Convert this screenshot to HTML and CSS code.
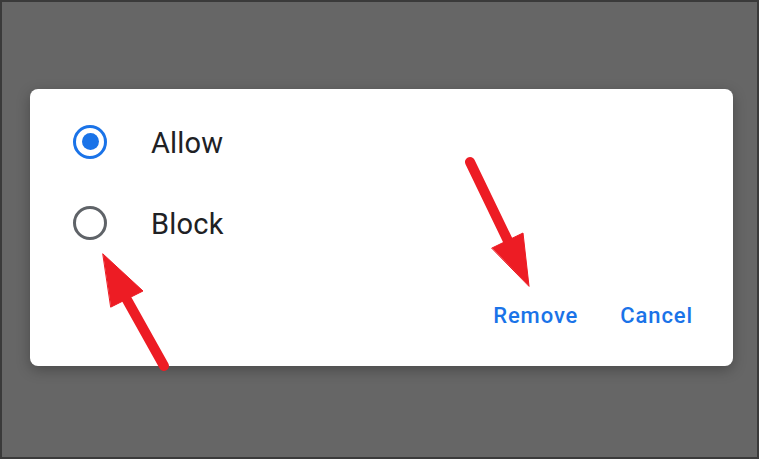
FILE: index.html
```html
<!DOCTYPE html>
<html>
<head>
<meta charset="utf-8">
<link rel="stylesheet" href="styles.css">
</head>
<body>
<div class="frame">
  <div class="dialog">
    <div class="options">
      <div class="option">
        <span class="radio checked"><span class="dot"></span></span>
        <span class="label">Allow</span>
      </div>
      <div class="option">
        <span class="radio"></span>
        <span class="label">Block</span>
      </div>
    </div>
    <div class="actions">
      <span class="btn">Remove</span>
      <span class="btn">Cancel</span>
    </div>
  </div>
  <svg class="arrows" width="759" height="459" viewBox="0 0 759 459">
    <g fill="#ed1c24" stroke="#ed1c24" stroke-linecap="round" stroke-linejoin="round">
      <line x1="470" y1="162" x2="510" y2="245" stroke-width="10"/>
      <polygon points="492,248 523,233 529,286" stroke-width="1"/>
      <line x1="164" y1="366" x2="126" y2="298" stroke-width="10"/>
      <polygon points="103,254 143,291 111,307" stroke-width="1"/>
    </g>
  </svg>
</div>
</body>
</html>
```

FILE: styles.css
```css
html, body {
  margin: 0;
  padding: 0;
}
body {
  width: 759px;
  height: 459px;
  overflow: hidden;
}
.frame {
  position: relative;
  box-sizing: border-box;
  width: 759px;
  height: 459px;
  background: #666666;
  border: 2px solid #3a3a3a;
  padding: 87px 0 0 28px;
  font-family: Roboto, "Liberation Sans", sans-serif;
}
.dialog {
  box-sizing: border-box;
  width: 703px;
  height: 277px;
  background: #ffffff;
  border-radius: 8px;
  box-shadow: 0 4px 14px rgba(0, 0, 0, 0.28);
  padding: 12px 40px 0 43px;
  display: flex;
  flex-direction: column;
}
.options {
  display: flex;
  flex-direction: column;
}
.option {
  height: 81px;
  display: flex;
  align-items: center;
  gap: 44px;
}
.radio {
  box-sizing: border-box;
  width: 34px;
  height: 34px;
  border-radius: 50%;
  border: 3.5px solid #5f6368;
  display: flex;
  align-items: center;
  justify-content: center;
}
.radio.checked {
  border-color: #1a73e8;
}
.dot {
  width: 17px;
  height: 17px;
  border-radius: 50%;
  background: #1a73e8;
}
.label {
  font-size: 29px;
  color: #202124;
  letter-spacing: 0.2px;
  padding-top: 3px;
}
.actions {
  margin-top: 32px;
  height: 40px;
  display: flex;
  justify-content: flex-end;
  align-items: center;
  gap: 42px;
}
.btn {
  font-size: 22px;
  font-weight: 500;
  color: #1a73e8;
  letter-spacing: 0.9px;
}
.arrows {
  position: absolute;
  left: -2px;
  top: -2px;
}
```
